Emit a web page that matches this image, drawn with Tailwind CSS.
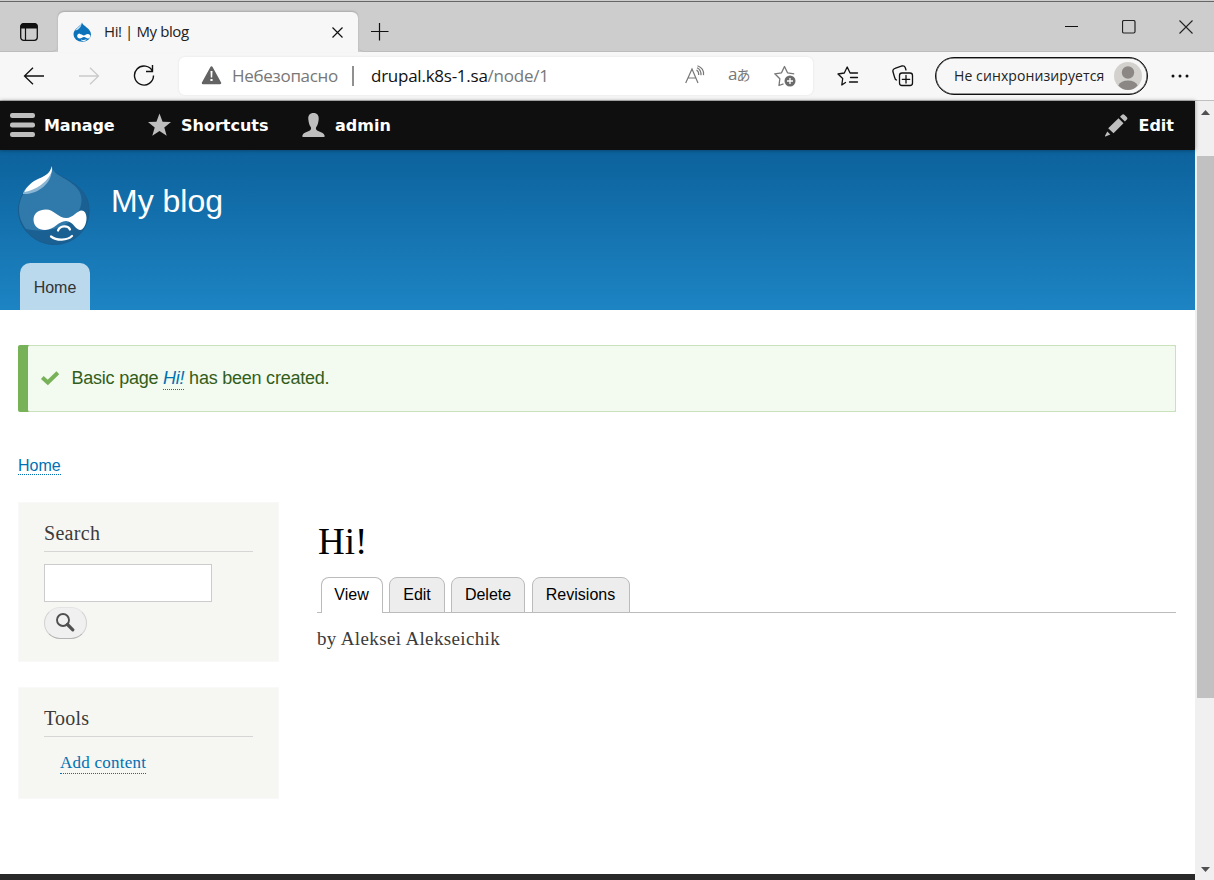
<!DOCTYPE html>
<html lang="ru">
<head>
<meta charset="utf-8">
<title>Hi! | My blog</title>
<script src="https://cdn.jsdelivr.net/npm/@tailwindcss/browser@4"></script>
</head>
<body class="w-[1214px] h-[880px] overflow-hidden bg-white flex flex-col font-['Open_Sans','Noto_Sans',sans-serif]">

<!-- Tab strip -->
<header class="h-[52px] shrink-0 bg-[#cdcdcd] flex items-end relative">
  <div class="absolute left-0 top-[1px] w-full h-px bg-[#666]"></div>
  <div class="w-[58px] h-[40px] shrink-0 border-b border-[#bdbdbd] rounded-br-[6px] flex">
    <svg class="ml-[20px] mt-[11px]" width="18" height="18" viewBox="0 0 18 18" fill="none" stroke="#111"><rect x=".7" y=".7" width="16.6" height="16.6" rx="3" stroke-width="1.3"/><path d="M1 3.5V3q0-2.300 2.500-2.300h11q2.500 0 2.500 2.300v2H1z" fill="#111"/><path d="M5.500 5v12" stroke-width="1.200"/></svg>
  </div>
  <div class="w-[300px] h-[40px] bg-[#f7f7f7] rounded-t-[6px] shadow-[0_-1px_2px_rgba(0,0,0,0.18)] flex shrink-0">
    <svg class="ml-[15px] mt-[10px]" width="19" height="20" viewBox="0 0 19 20"><path d="M9 .500C9.500 4 18 6 18 12.500a8.700 7.300 0 0 1-17.500 0C.500 6 8.500 4 9 .500z" fill="#0c72b9"/><path d="M8.700 1.500C8 3.700 3.500 5.500 2.200 8.500 5 8.500 8.500 5 8.700 1.500z" fill="#b9dcf2"/><path d="M6.800 12c2 0 2.800 1.500 4 1.500s2.200-1.500 4-1.500 2.500 1 2.500 2.200-1 2.300-2.300 2.300-2.500-1.500-4-1.500-2.500 1.500-4.200 1.500-2.600-1-2.600-2.500 1-2.500 2.600-2.500zM8 18.300q3 1.500 5.500-.300l-.200-.800q-2.500 1.300-5 .200z" fill="#fff"/></svg>
    <span class="ml-[12px] mt-[9px] h-[20px] leading-[20px] text-[15px] tracking-[-0.4px] font-normal text-[#222] whitespace-nowrap w-[228px]">Hi! | My blog</span>
    <svg class="mt-[15px]" width="11" height="11" viewBox="0 0 11 11" stroke="#111" stroke-width="1.200"><path d="M.500.500l10 10M10.500.500l-10 10"/></svg>
  </div>
  <div class="grow h-[40px] border-b border-[#bdbdbd] rounded-bl-[6px] flex">
    <svg class="ml-[13px] mt-[11px]" width="18" height="18" viewBox="0 0 18 18" stroke="#111" stroke-width="1.200"><path d="M8.500 0v17.500M0 8.500h17.500"/></svg>
    <svg class="ml-[676px] mt-[7px]" width="13" height="14" viewBox="0 0 13 14" stroke="#111" stroke-width="1"><path d="M0 7.500h13"/></svg>
    <svg class="ml-[44px] mt-[8px]" width="14" height="14" viewBox="0 0 14 14" fill="none" stroke="#222" stroke-width="1.200"><rect x=".500" y=".500" width="12.500" height="12.500" rx="1.500"/></svg>
    <svg class="ml-[43px] mt-[8px]" width="14" height="14" viewBox="0 0 14 14" stroke="#222" stroke-width="1.100"><path d="M.500.500l13 13M13.500.500l-13 13"/></svg>
  </div>
</header>

<!-- Address toolbar -->
<div class="h-[49px] shrink-0 bg-[#f7f7f7] border-b border-[#bfbfbf] flex items-center">
  <svg class="ml-[23px] -mt-px" width="22" height="18" viewBox="0 0 22 18" fill="none" stroke="#111" stroke-width="1.300"><path d="M21 9H1.500M10 .700L1.500 9l8.500 8.300"/></svg>
  <svg class="ml-[34px] -mt-px" width="22" height="18" viewBox="0 0 22 18" fill="none" stroke="#cacaca" stroke-width="1.300"><path d="M0 9h19.500M11 .700L19.500 9 11 17.300"/></svg>
  <svg class="ml-[32px] -mt-[2px]" width="22" height="22" viewBox="0 0 22 22" fill="none" stroke="#111" stroke-width="1.400"><path d="M19.600 7.500A9.500 9.500 0 1 0 20.500 11.500M19.500 1v6.500H13"/></svg>
  <div class="ml-[24px] w-[634px] h-[38px] bg-white rounded-[6px] shadow-[0_0_3px_rgba(0,0,0,0.08)] flex items-center text-[#777] font-normal text-[17px] whitespace-nowrap">
    <svg class="ml-[22px] -mt-px" width="21" height="19" viewBox="0 0 21 19"><path d="M10.500 1.500L19 17H2z" fill="#636363" stroke="#636363" stroke-width="2.500" stroke-linejoin="round"/><path d="M9.500 5h2l-.300 6.500h-1.400zM9.400 13h2.200v2H9.400z" fill="#fff"/></svg>
    <span class="ml-[10px] w-[120px] tracking-[-0.3px]">Небезопасно</span>
    <div class="w-[2px] h-[20px] bg-[#909090]"></div>
    <span class="ml-[17px] w-[314px] tracking-[-0.25px]"><span class="text-[#111]">drupal.k8s-1.sa</span>/node/1</span>
    <svg class="-mt-[3px]" width="21" height="19" viewBox="0 0 21 19" fill="none" stroke="#777" stroke-width="1.200"><path d="M.700 18L7 4l6 14M3 13h8M11.500 5q2.500 1.500 2.200 5M12 2.700q4.300 2 4 7.500M12.500.700q7 2.500 6 9.500"/></svg>
    <span class="ml-[22px] w-[24px] font-normal text-[17px] leading-[20px] tracking-[-1px] -mt-[4px] font-['Open_Sans','Noto_Sans_CJK_JP',sans-serif]">a<span class="text-[14px]">あ</span></span>
    <svg class="ml-[22px] -mt-px" width="23" height="22" viewBox="0 0 23 22" fill="none" stroke="#777" stroke-width="1.300" stroke-linejoin="round"><path d="M9.500 18.800l-4.500 1.700.800-6.700L.800 8.800l6.700-1L10.500 1.500l3 6.300 6.700 1"/><circle cx="16" cy="16" r="5.500" fill="#6b6b6b" stroke="none"/><path d="M16 13v6M13 16h6" stroke="#fff"/></svg>
  </div>
  <svg class="ml-[24px] -mt-px" width="22" height="20" viewBox="0 0 22 20" fill="none" stroke="#111" stroke-width="1.300" stroke-linejoin="round" stroke-linecap="round"><path d="M8.500 16.500L4.800 19l.900-6.500L1 8l6.300-1L10.200 1l2.900 6h7.400M13.500 11.500h7M12.500 16h8"/></svg>
  <svg class="ml-[33px] -mt-px" width="22" height="22" viewBox="0 0 22 22" fill="none" stroke="#111" stroke-width="1.300" stroke-linecap="round"><rect x="7.500" y="8" width="13" height="12.500" rx="2.500"/><path d="M14 10.500v7.500M10.300 14.300h7.400M4.500 15Q3 14.500 2.500 12L.900 6.500Q.500 4 3 3.300L10 1q2.500-.500 3.200 1.500L14 5"/></svg>
  <div class="ml-[21px] w-[213px] h-[38px] border border-[#111] shadow-[inset_0_0_0_0.5px_#333] rounded-full flex items-center text-[14px] tracking-[0.1px] font-normal text-[#222] whitespace-nowrap">
    <span class="ml-[18px] w-[160px] shrink-0 -mt-px">Не синхронизируется</span>
    <svg width="28" height="28" viewBox="0 0 28 28"><circle cx="14" cy="14" r="14" fill="#d3d1cd"/><circle cx="14" cy="10.500" r="6.200" fill="#8a8784"/><path d="M4.300 23.500Q7 18.500 14 18.500t9.700 5Q19.500 28 14 28t-9.700-4.500z" fill="#8a8784"/></svg>
  </div>
  <svg class="ml-[23px]" width="18" height="4" viewBox="0 0 18 4" fill="#111"><circle cx="2" cy="2" r="1.500"/><circle cx="9" cy="2" r="1.500"/><circle cx="16" cy="2" r="1.500"/></svg>
</div>

<div class="flex h-[779px]">
<main class="w-[1195px] h-[779px] flex flex-col font-['Liberation_Sans',Arial,sans-serif]">
  <!-- Admin bar -->
  <nav class="h-[49px] shrink-0 bg-[#0f0f0f] flex items-center text-white font-bold text-[16px] font-['DejaVu_Sans',Verdana,sans-serif] relative z-10 shadow-[0_0_4px_rgba(0,0,0,0.4)]">
    <svg class="ml-[10px] -mt-[2px]" width="25" height="24" viewBox="0 0 25 24" fill="#bebebe"><rect width="25" height="5" rx="2.200"/><rect y="9.500" width="25" height="5" rx="2.200"/><rect y="19" width="25" height="5" rx="2.200"/></svg>
    <span class="ml-[9px] w-[104px] pt-px tracking-[-0.1px]">Manage</span>
    <svg class="-mt-[2px]" width="23" height="24" viewBox="0 0 24 24" fill="#bebebe"><path d="M12 0l3.200 8.500 8.800.400-7 5.600 2.500 8.800L12 18.300l-7.500 5L7 14.500 0 8.900l8.800-.400z"/></svg>
    <span class="ml-[10px] w-[121px] pt-px">Shortcuts</span>
    <svg class="-mt-[2px]" width="23" height="24" viewBox="0 0 24 24" preserveAspectRatio="none" fill="#bebebe"><path d="M12 0c4 0 5.800 2.600 5.400 6.500-.300 3.300-1.300 6-2.500 7.500-.800 1.200-.400 3 1.300 3.700 3.300 1.300 6.800 2 7.500 5.300q.100 1-1 1H1.300q-1.200 0-1-1c.700-3.300 4.200-4 7.500-5.300 1.700-.700 2.100-2.500 1.300-3.700-1.200-1.500-2.200-4.200-2.500-7.500C6.200 2.600 8 0 12 0z"/></svg>
    <span class="ml-[10px] pt-px">admin</span>
    <svg class="ml-auto" width="23" height="23" viewBox="0 0 23 23" fill="#bebebe"><path d="M13.500 4.300l5 5L8.500 19.300l-5.300-5zM15 2.800L17 .800q1.200-1.100 2.600.200L21.700 3q1.300 1.400.200 2.600l-2 2zM2.300 17.500l3 3L.500 22.500q-.800 0-.500-.800z"/></svg>
    <span class="ml-[10px] mr-[21px] pt-px">Edit</span>
  </nav>

  <!-- Site header -->
  <div class="h-[160px] shrink-0 bg-linear-to-b from-[#0c629c] to-[#1d84c3] flex flex-col justify-between">
    <div class="flex pt-[16px] pl-[18px]">
      <svg class="-mt-px" width="72" height="80" viewBox="0 0 72 80">
        <path d="M34 .500c1 8 8 10 16 14.500 13 7 21 16 21 30.500C71 66 55 79.500 36.500 79.500S.500 65 .500 45C.500 32 8 22 17 16.500 25 11.500 33 9 34 .500z" fill="#1b6093" stroke="#1a5d8e" stroke-width="1"/>
        <path d="M34 1c1 7.500 8 9.500 15 14 9 6 14.500 11 14.500 20 0 15-14 27-31 29.500-10 1.500-18 1-24.500-.500C3 57 1 51 1 45c0-13 7.500-22.500 16.500-28.500C25 11.500 33 9 34 1z" fill="#3079ab"/>
        <path d="M5 28C12 13 33 16 33.500 7c0 10-13 23-28.500 22z" fill="#8ab6d4"/>
        <path d="M33.500 1c.800 3 .800 6-1 8.500-5.500 9-14 15-26 17.500C9 21 14 16.500 21 13.500 28 10.500 32.500 8 33.500 1z" fill="#fff"/>
        <path d="M28 44.500c8 0 12 8.500 20.500 8.500 6 0 11-7.500 15-7.500 3 0 5 3 5 7.500 0 6-3 12-6.500 12-4.500 0-7-9-14-9-8 0-11.500 9-21 9-6.500 0-11.500-4-11.500-10.500s5.500-10 12.500-10z" fill="#fff"/>
        <path d="M40 65.500c2-5 10-5.500 12-1M33 71.500c6 4.500 16 4 21-.500" fill="none" stroke="#fff" stroke-width="2.200" stroke-linecap="round"/>
      </svg>
      <h1 class="ml-[21px] mt-[15px] text-[32px] leading-[40px] text-white">My blog</h1>
    </div>
    <div class="ml-[20px] w-[70px] h-[47px] rounded-t-[10px] bg-[#bbd9ed] text-[#333] text-[16px] flex justify-center pt-[13px]">Home</div>
  </div>

  <!-- Status message -->
  <div class="mt-[35px] ml-[18px] w-[1158px] h-[67px] shrink-0 bg-[#77b259] rounded-[2px] pl-[10px]">
    <div class="h-full bg-[#f3faef] border border-l-0 border-[#c9e1bd] rounded-[2px] flex items-center pl-[12px]">
      <svg class="-mt-[2px]" width="20" height="16" viewBox="0 0 20 16"><path d="M2.300 7.500l5.500 5L17.800 2.700" fill="none" stroke="#77b259" stroke-width="4"/></svg>
      <p class="ml-[11.500px] -mt-[2px] text-[18px] leading-[22px] text-[#325e1c] tracking-[-0.23px]">Basic page <a class="italic text-[#0071b3] border-b border-dotted border-[#0071b3] pb-px">Hi!</a> has been created.</p>
    </div>
  </div>

  <div class="mt-[44px] ml-[18px] h-[20px] text-[16px] leading-[20px] shrink-0"><a class="text-[#0071b3] border-b border-dotted border-[#0071b3]">Home</a></div>

  <div class="mt-[26px] ml-[18px] flex h-[372px] shrink-0">
    <aside class="w-[261px] font-['Liberation_Serif',Georgia,serif] text-[#3b3b3b]">
      <section class="h-[160px] bg-[#f6f6f2] border border-[#f9f9f9] px-[25px] pt-[17px]">
        <h2 class="h-[32px] border-b border-[#d6d6d6] text-[20px] leading-[26px] w-[209px] tracking-[0.3px]">Search</h2>
        <div class="mt-[12px] w-[168px] h-[38px] bg-white border border-[#ccc]"></div>
        <div class="mt-[5px] w-[43px] h-[32px] rounded-full bg-[#f0f0f0] border border-[#d2d2d2] border-t-[#e4e4e4] border-b-[#b4b4b4] flex pl-[10px] pt-[4px]">
          <svg width="20" height="20" viewBox="0 0 20 20" fill="none" stroke="#505050"><circle cx="8" cy="8" r="6" stroke-width="1.900"/><path d="M12.500 12.500l5.300 5.300" stroke-width="3.200" stroke-linecap="round"/></svg>
        </div>
      </section>
      <section class="mt-[25px] h-[112px] bg-[#f6f6f2] border border-[#f9f9f9] px-[25px] pt-[17px]">
        <h2 class="h-[32px] border-b border-[#d6d6d6] text-[20px] leading-[26px] w-[209px] tracking-[0.2px]">Tools</h2>
        <div class="mt-[16px] ml-[16px] text-[17px] leading-[20px] tracking-[0.25px]"><a class="text-[#0071b3] border-b border-dotted border-[#0071b3] pb-px">Add content</a></div>
      </section>
    </aside>
    <article class="ml-[38px] w-[859px] font-['Liberation_Serif',Georgia,serif]">
      <h1 class="mt-[17px] pl-px text-[37px] leading-[46px] text-black">Hi!</h1>
      <div class="mt-[12px] h-[36px] flex font-['Liberation_Sans',Arial,sans-serif] text-[16px] text-black text-center leading-[34px] shadow-[inset_0_-1px_0_#bbb] pl-[4px]">
        <div class="w-[62px] bg-white border border-b-0 border-[#bbb] rounded-t-[8px] pr-px">View</div>
        <div class="ml-[6px] w-[56px] bg-[#ededed] border border-[#bbb] rounded-t-[8px]">Edit</div>
        <div class="ml-[6px] w-[74px] bg-[#ededed] border border-[#bbb] rounded-t-[8px]">Delete</div>
        <div class="ml-[7px] w-[98px] bg-[#ededed] border border-[#bbb] rounded-t-[8px] pr-px">Revisions</div>
      </div>
      <p class="mt-[14px] text-[19px] leading-[24px] text-[#3b3b3b] tracking-[0.36px]">by Aleksei Alekseichik</p>
    </article>
  </div>
  <footer class="mt-auto h-[6px] shrink-0 bg-[#292929]"></footer>
</main>

<!-- Scrollbar -->
<div class="w-[19px] h-[779px] bg-[#f0f0f0] flex flex-col items-end">
  <svg class="mr-[4px] mt-[9px] shrink-0" width="9" height="5" viewBox="0 0 9 5"><path d="M0 5L4.500 0 9 5z" fill="#505050"/></svg>
  <div class="mt-[41px] w-[17px] h-[542px] bg-[#c1c1c1] shrink-0"></div>
  <svg class="mr-[4px] mt-auto mb-[8px] shrink-0" width="9" height="5" viewBox="0 0 9 5"><path d="M0 0h9L4.500 5z" fill="#505050"/></svg>
</div>
</div>
</body>
</html>
